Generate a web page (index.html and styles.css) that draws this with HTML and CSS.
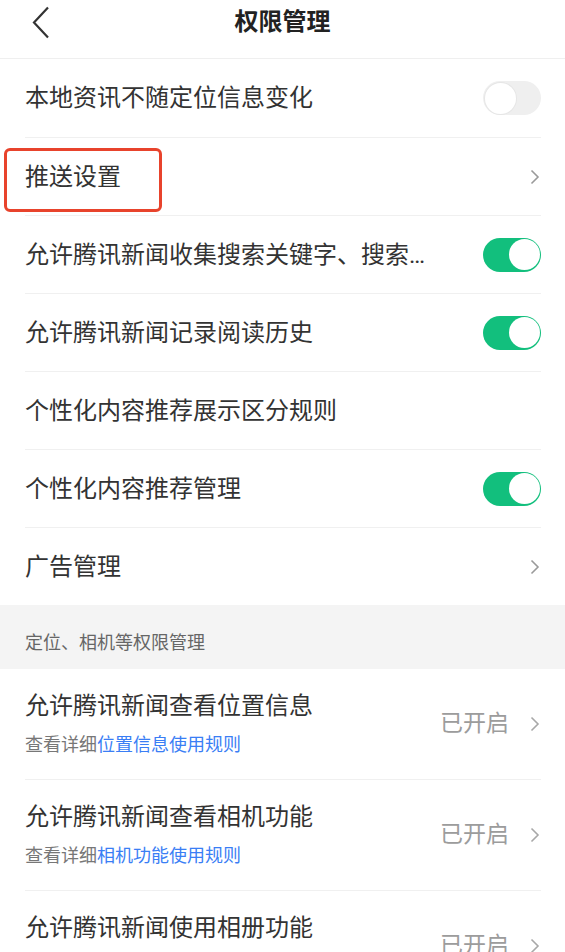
FILE: index.html
```html
<!DOCTYPE html>
<html lang="zh-CN">
<head>
<meta charset="utf-8">
<title>权限管理</title>
<link rel="stylesheet" href="styles.css">
</head>
<body>
<header class="nav">
  <div class="nav-left">
    <svg class="back" width="18" height="33" viewBox="0 0 18 33"><path d="M16 1.5 L2 16.5 L16 31.5" fill="none" stroke="#333" stroke-width="2.2" stroke-linejoin="miter"/></svg>
  </div>
  <h1 class="nav-title">权限管理</h1>
  <div class="nav-right"></div>
</header>

<ul class="list">
  <li class="row"><span class="label">本地资讯不随定位信息变化</span><span class="switch"></span></li>
  <li class="row"><span class="label">推送设置</span><svg class="chev" width="10" height="16" viewBox="0 0 10 16"><path d="M1.5 1.5 L8 8 L1.5 14.5" fill="none" stroke="#9a9a9a" stroke-width="1.6"/></svg></li>
  <li class="row"><span class="label">允许腾讯新闻收集搜索关键字、搜索记录等信息</span><span class="switch on"></span></li>
  <li class="row"><span class="label">允许腾讯新闻记录阅读历史</span><span class="switch on"></span></li>
  <li class="row"><span class="label">个性化内容推荐展示区分规则</span></li>
  <li class="row"><span class="label">个性化内容推荐管理</span><span class="switch on"></span></li>
  <li class="row"><span class="label">广告管理</span><svg class="chev" width="10" height="16" viewBox="0 0 10 16"><path d="M1.5 1.5 L8 8 L1.5 14.5" fill="none" stroke="#9a9a9a" stroke-width="1.6"/></svg></li>
</ul>

<div class="section-label">定位、相机等权限管理</div>

<ul class="list">
  <li class="perm">
    <div class="perm-text">
      <div class="perm-title">允许腾讯新闻查看位置信息</div>
      <div class="perm-sub">查看详细<span class="link">位置信息使用规则</span></div>
    </div>
    <div class="perm-state"><span>已开启</span><svg class="chev" width="10" height="16" viewBox="0 0 10 16"><path d="M1.5 1.5 L8 8 L1.5 14.5" fill="none" stroke="#a8a8a8" stroke-width="1.6"/></svg></div>
  </li>
  <li class="perm">
    <div class="perm-text">
      <div class="perm-title">允许腾讯新闻查看相机功能</div>
      <div class="perm-sub">查看详细<span class="link">相机功能使用规则</span></div>
    </div>
    <div class="perm-state"><span>已开启</span><svg class="chev" width="10" height="16" viewBox="0 0 10 16"><path d="M1.5 1.5 L8 8 L1.5 14.5" fill="none" stroke="#a8a8a8" stroke-width="1.6"/></svg></div>
  </li>
  <li class="perm">
    <div class="perm-text">
      <div class="perm-title">允许腾讯新闻使用相册功能</div>
      <div class="perm-sub">查看详细<span class="link">相册功能使用规则</span></div>
    </div>
    <div class="perm-state"><span>已开启</span><svg class="chev" width="10" height="16" viewBox="0 0 10 16"><path d="M1.5 1.5 L8 8 L1.5 14.5" fill="none" stroke="#a8a8a8" stroke-width="1.6"/></svg></div>
  </li>
</ul>

<div class="annotation"></div>
</body>
</html>
```

FILE: styles.css
```css
* { box-sizing: border-box; }

html, body {
  margin: 0;
  padding: 0;
  background: #fff;
}

body {
  position: relative;
  font-family: "Roboto", "Noto Sans CJK SC", sans-serif;
  color: #333;
  overflow: hidden;
}

.nav {
  display: grid;
  grid-template-columns: 1fr auto 1fr;
  align-items: center;
  height: 59px;
  padding-bottom: 14px;
  border-bottom: 1px solid #efefef;
}

.nav-left {
  display: flex;
  align-items: center;
  padding-left: 32px;
}

.back { display: block; }

.nav-title {
  margin: 0;
  font-size: 24px;
  line-height: 44px;
  font-weight: 700;
  color: #222;
}

.list {
  list-style: none;
  margin: 0;
  padding: 0 24px 0 25px;
}

.row {
  display: flex;
  align-items: center;
  height: 78px;
}

.row + .row,
.perm + .perm {
  border-top: 1px solid #f0f0f0;
}

.label {
  flex: 1;
  min-width: 0;
  margin-right: 52px;
  font-size: 24px;
  line-height: 32px;
  white-space: nowrap;
  overflow: hidden;
  text-overflow: ellipsis;
  color: #333;
}

.chev {
  display: block;
  flex: none;
  margin-right: 1px;
}

.switch {
  position: relative;
  flex: none;
  width: 58px;
  height: 34px;
  border-radius: 17px;
  background: #efefef;
}

.switch::after {
  content: "";
  position: absolute;
  top: 1.5px;
  left: 1.5px;
  width: 31px;
  height: 31px;
  border-radius: 50%;
  background: #fff;
  box-shadow: 0 0 0 1px #e6e6e6;
}

.switch.on {
  background: #12bf7d;
}

.switch.on::after {
  left: auto;
  right: 1.5px;
  box-shadow: none;
}

.section-label {
  height: 64px;
  padding: 26px 0 0 25px;
  background: #f4f4f4;
  font-size: 18px;
  line-height: 24px;
  color: #666;
}

.perm {
  display: flex;
  align-items: center;
  height: 111px;
  padding: 22px 0;
}

.perm:first-child {
  height: 110px;
}

.perm-text {
  flex: 1;
  min-width: 0;
  display: flex;
  flex-direction: column;
  gap: 12px;
}

.perm-title {
  font-size: 24px;
  line-height: 30px;
  color: #333;
  white-space: nowrap;
}

.perm-sub {
  font-size: 18px;
  line-height: 24px;
  color: #777;
  white-space: nowrap;
}

.link {
  color: #3a7ef5;
}

.perm-state {
  display: flex;
  align-items: center;
  gap: 21px;
  font-size: 23px;
  line-height: 30px;
  color: #9c9c9c;
}

.annotation {
  position: absolute;
  left: 4px;
  top: 148px;
  width: 158px;
  height: 64px;
  border: 3px solid #e8432c;
  border-radius: 6px;
}
```
